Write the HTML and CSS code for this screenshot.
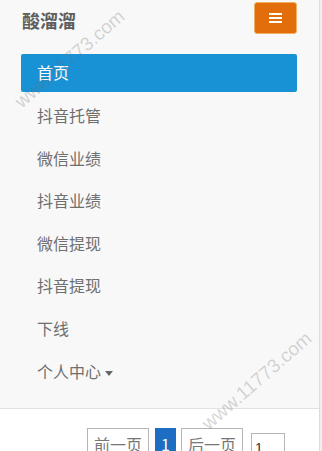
FILE: index.html
```html
<!DOCTYPE html>
<html lang="zh">
<head>
<meta charset="utf-8">
<link rel="stylesheet" href="styles.css">
</head>
<body>
<div class="page">
  <nav class="navbar">
    <div class="nav-header">
      <span class="brand">酸溜溜</span>
      <button class="toggle" type="button">
        <span class="bar"></span><span class="bar"></span><span class="bar"></span>
      </button>
    </div>
    <ul class="nav">
      <li class="item active">首页</li>
      <li class="item">抖音托管</li>
      <li class="item">微信业绩</li>
      <li class="item">抖音业绩</li>
      <li class="item">微信提现</li>
      <li class="item">抖音提现</li>
      <li class="item">下线</li>
      <li class="item">个人中心<span class="caret"></span></li>
    </ul>
  </nav>
  <div class="pager">
    <span class="pg">前一页</span>
    <span class="pg current">1</span>
    <span class="pg">后一页</span>
    <span class="pg-input">1</span>
  </div>
</div>
<span class="watermark wm1">www.11773.com</span>
<span class="watermark wm2">www.11773.com</span>
</body>
</html>
```

FILE: styles.css
```css
html, body {
  margin: 0;
  padding: 0;
}
body {
  background: #efefef;
  font-family: "Noto Sans CJK SC", "Liberation Sans", sans-serif;
  width: 322px;
  height: 451px;
  overflow: hidden;
  position: relative;
}
.page {
  width: 319px;
  height: 451px;
  background: #fff;
  border-right: 1px solid #dcdcdc;
}
.navbar {
  background: #f8f8f8;
  border-bottom: 1px solid #e2e2e2;
  height: 409px;
  box-sizing: border-box;
}
.nav-header {
  display: flex;
  justify-content: space-between;
  align-items: flex-start;
  height: 54px;
  padding: 0 22px 0 22px;
}
.brand {
  margin-top: 6px;
  font-size: 18px;
  font-weight: bold;
  color: #5e5e5e;
  line-height: 28px;
}
.toggle {
  margin-top: 2px;
  width: 43px;
  height: 32px;
  background: #e26d0b;
  border: 1px solid #f2b064;
  border-radius: 3px;
  padding: 0;
  display: flex;
  flex-direction: column;
  justify-content: center;
  align-items: center;
  gap: 2px;
}
.bar {
  display: block;
  width: 13px;
  height: 2px;
  background: #fff;
}
.nav {
  list-style: none;
  margin: 0 22px 0 21px;
  padding: 0;
}
.item {
  height: 42.6px;
  line-height: 42.6px;
  padding-left: 16px;
  font-size: 16px;
  color: #6f6f6f;
}
.item.active {
  height: 38px;
  line-height: 37px;
  margin-bottom: 2px;
  background: #1991d5;
  color: #fff;
  border-radius: 2px;
}
.caret {
  display: inline-block;
  width: 0;
  height: 0;
  margin-left: 4px;
  vertical-align: middle;
  border-top: 5px solid #666;
  border-left: 4.5px solid transparent;
  border-right: 4.5px solid transparent;
}
.pager {
  display: flex;
  align-items: flex-start;
  padding: 19px 0 0 87px;
}
.pg {
  border: 1px solid #b5b5b5;
  font-size: 16px;
  color: #777;
  padding: 0 6px;
  height: 32px;
  line-height: 30px;
  margin-right: 6px;
}
.pg.current {
  background: #1d6ec3;
  border-color: #1d6ec3;
  color: #fff;
  padding: 0 5px;
  margin-right: 5px;
}
.pg-input {
  margin-top: 5px;
  margin-left: 2px;
  width: 34px;
  height: 28px;
  border: 1px solid #b5b5b5;
  font-family: "Liberation Sans", sans-serif;
  font-size: 14px;
  color: #333;
  padding: 6px 0 0 3px;
  box-sizing: border-box;
}
.watermark {
  position: absolute;
  font-family: "Liberation Sans", sans-serif;
  font-size: 19px;
  color: rgba(110, 110, 110, 0.28);
  white-space: nowrap;
  transform: translate(-50%, -50%) rotate(-41deg);
  pointer-events: none;
}
.wm1 {
  left: 70px;
  top: 59px;
}
.wm2 {
  left: 257px;
  top: 381px;
}
```
